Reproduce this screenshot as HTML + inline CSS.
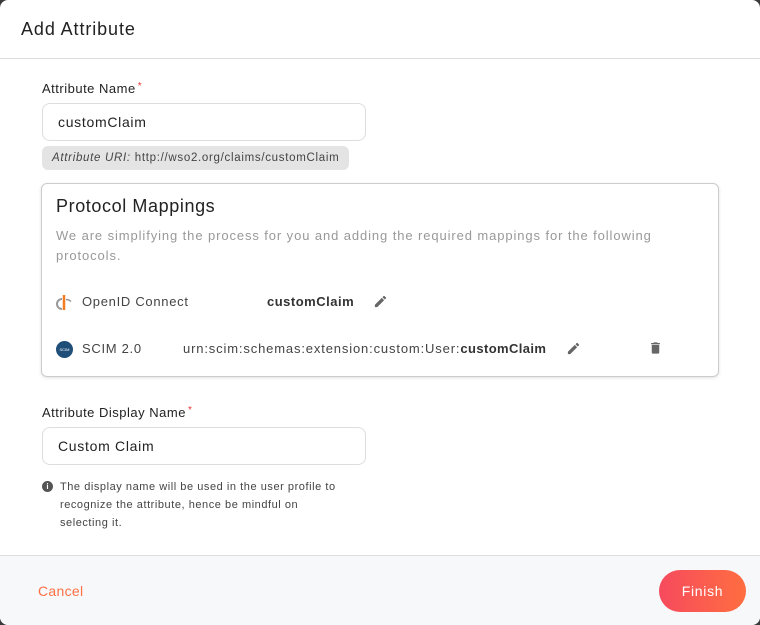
<!DOCTYPE html>
<html><head><style>
*{box-sizing:border-box;margin:0;padding:0}
body{width:760px;height:625px;background:#3a3a3a;font-family:"Liberation Sans",sans-serif;color:#333;overflow:hidden;letter-spacing:0.7px}
.m{position:absolute;left:0;top:0;width:760px;height:625px;background:#fff;border-radius:8px;overflow:hidden}
.hd{height:59px;border-bottom:1px solid #ddd;padding:19px 21px;font-size:18px;color:#222;letter-spacing:0.9px}
.abs{position:absolute;white-space:nowrap}
.lbl{font-size:13px;color:#222;letter-spacing:0.5px}
.req{color:#e53935;font-size:10px;vertical-align:top;margin-left:2px}
.inp{border:1px solid #ddd;border-radius:8px;height:38px;width:324px;padding:0 15px;line-height:36px;font-size:14px;color:#222}
.uri{background:#e4e4e4;border-radius:6px;height:24px;padding:0 10px;line-height:24px;font-size:11.5px;color:#444}
.box{border:1px solid #ccc;border-radius:6px;box-shadow:0 1px 3px rgba(0,0,0,.12)}
.ft{position:absolute;left:0;top:555px;width:760px;height:70px;background:#f7f8fa;border-top:1px solid #ddd}
.btn{position:absolute;left:659px;top:570px;width:87px;height:42px;border-radius:21px;background:linear-gradient(90deg,#f64a5e,#ff6e40);color:#fff;font-size:14px;text-align:center;line-height:42px}
</style></head><body><div class="m">
<div class="hd">Add Attribute</div>
<div class="abs lbl" style="left:42px;top:81px">Attribute Name<span class="req">*</span></div>
<div class="abs inp" style="left:42px;top:103px">customClaim</div>
<div class="abs uri" style="left:42px;top:146px"><i>Attribute URI:</i> http://wso2.org/claims/customClaim</div>
<div class="abs box" style="left:41px;top:183px;width:678px;height:194px"></div>
<div class="abs" style="left:56px;top:196px;font-size:18px;color:#222;letter-spacing:0.6px">Protocol Mappings</div>
<div class="abs" style="left:56px;top:226px;width:640px;white-space:normal;font-size:13px;line-height:20px;color:#999;letter-spacing:0.9px">We are simplifying the process for you and adding the required mappings for the following protocols.</div>
<svg class="abs" style="left:55px;top:293px" width="18" height="18" viewBox="0 0 18 18"><path d="M9 2v15" stroke="#f47b20" stroke-width="2.5"/><path d="M7 6A5 5 0 0 0 7 16" stroke="#999" stroke-width="2" fill="none"/><path d="M11 6.5q3 0 5 2" stroke="#999" stroke-width="1.5" fill="none"/></svg>
<div class="abs" style="left:82px;top:294px;font-size:13px;color:#444">OpenID Connect</div>
<div class="abs" style="left:267px;top:294px;font-size:13px;font-weight:bold;color:#333;letter-spacing:0.5px">customClaim</div>
<svg class="abs" style="left:373px;top:294px" width="15" height="15" viewBox="0 0 24 24"><path fill="#666" d="M3 17.25V21h3.75L17.8 9.94l-3.75-3.75zM20.7 7.04a1 1 0 0 0 0-1.41l-2.34-2.34a1 1 0 0 0-1.41 0l-1.83 1.83 3.75 3.75z"/></svg>
<div class="abs" style="left:56px;top:341px;width:17px;height:17px;border-radius:50%;background:#1f4e79;color:#fff;font-size:4px;letter-spacing:0;text-align:center;line-height:17px">SCIM</div>
<div class="abs" style="left:82px;top:341px;font-size:13px;color:#444">SCIM 2.0</div>
<div class="abs" style="left:183px;top:341px;font-size:13px;color:#444;letter-spacing:0.85px">urn:scim:schemas:extension:custom:User:<b style="color:#333;letter-spacing:0.4px">customClaim</b></div>
<svg class="abs" style="left:566px;top:341px" width="15" height="15" viewBox="0 0 24 24"><path fill="#666" d="M3 17.25V21h3.75L17.8 9.94l-3.75-3.75zM20.7 7.04a1 1 0 0 0 0-1.41l-2.34-2.34a1 1 0 0 0-1.41 0l-1.83 1.83 3.75 3.75z"/></svg>
<svg class="abs" style="left:648px;top:340px" width="15" height="16" viewBox="0 0 24 24"><path fill="#666" d="M6 19a2 2 0 0 0 2 2h8a2 2 0 0 0 2-2V7H6zM19 4h-3.5l-1-1h-5l-1 1H5v2h14z"/></svg>
<div class="abs lbl" style="left:42px;top:405px">Attribute Display Name<span class="req">*</span></div>
<div class="abs inp" style="left:42px;top:427px">Custom Claim</div>
<div class="abs" style="left:42px;top:481px;width:11px;height:11px;border-radius:50%;background:#555;color:#fff;font-size:8px;letter-spacing:0;font-weight:bold;text-align:center;line-height:11px">i</div>
<div class="abs" style="left:60px;top:478px;width:296px;white-space:normal;font-size:11px;line-height:18px;color:#444;letter-spacing:0.55px">The display name will be used in the user profile to recognize the attribute, hence be mindful on<br>selecting it.</div>
<div class="ft"></div>
<div class="abs" style="left:38px;top:583px;font-size:14px;color:#ff7043;letter-spacing:0.3px">Cancel</div>
<div class="btn">Finish</div>
</div></body></html>
